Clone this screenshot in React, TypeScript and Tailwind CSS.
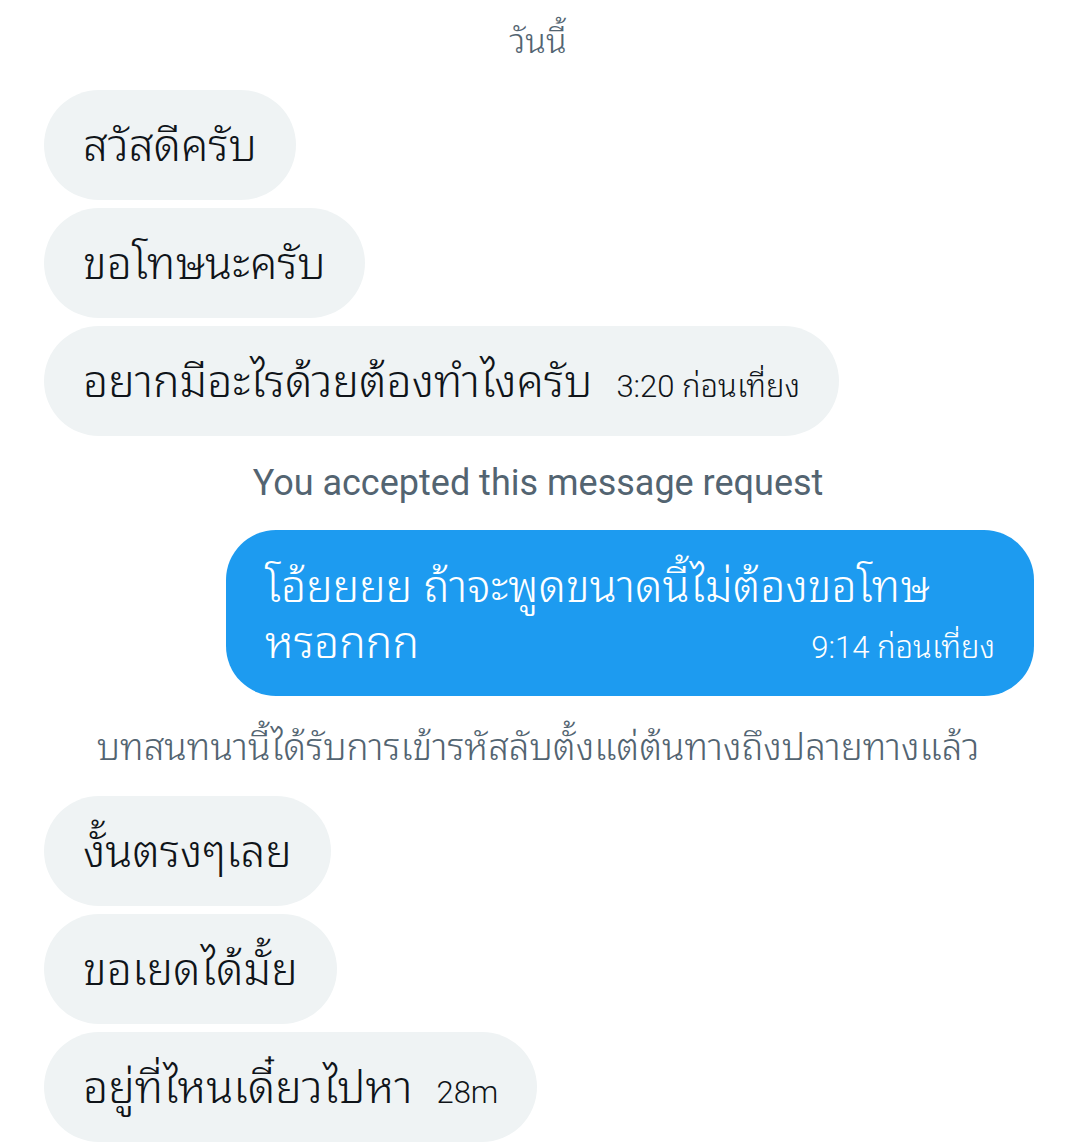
import React from "react";

function In({ text, time }: { text: string; time?: string }) {
  return (
    <div className="flex">
      <div className="flex h-[110px] items-center rounded-full bg-[#eff3f4] px-[39px] text-[#0f1419]">
        <span className="mt-[2px] text-[44.5px] font-[350] leading-none">{text}</span>
        {time && <span className="ml-[24px] mt-[10px] text-[31px] font-[350] leading-none text-[#0f1419]">{time}</span>}
      </div>
    </div>
  );
}

export default function App() {
  return (
    <div className="min-h-[1144px] w-[1076px] bg-white font-[Roboto,'Noto_Sans_Thai_Looped',sans-serif]">
      <div className="flex flex-col px-[44px]">
        <div className="flex h-[90px] items-start justify-center pt-[24px] text-[34px] font-[350] leading-none text-[#536471]">วันนี้</div>
        <div className="flex flex-col gap-[8px]">
          <In text="สวัสดีครับ" />
          <In text="ขอโทษนะครับ" />
          <In text="อยากมีอะไรด้วยต้องทำไงครับ" time="3:20 ก่อนเที่ยง" />
        </div>
        <div className="flex h-[94px] items-center justify-center text-[36px] text-[#536471]">You accepted this message request</div>
        <div className="flex justify-end">
          <div className="-mr-[2px] flex h-[166px] w-[808px] flex-col justify-center rounded-[50px] bg-[#1d9bf0] px-[39px] pt-[4px] text-white">
            <div className="text-[44.5px] font-[350] leading-[56px]">โอ้ยยยย ถ้าจะพูดขนาดนี้ไม่ต้องขอโทษ</div>
            <div className="flex items-baseline justify-between">
              <span className="text-[44.5px] font-[350] leading-[56px]">หรอกกก</span>
              <span className="text-[31px] font-[350] leading-none">9:14 ก่อนเที่ยง</span>
            </div>
          </div>
        </div>
        <div className="flex h-[100px] items-center justify-center pt-[4px] text-[37px] font-[350] text-[#536471]">บทสนทนานี้ได้รับการเข้ารหัสลับตั้งแต่ต้นทางถึงปลายทางแล้ว</div>
        <div className="flex flex-col gap-[8px]">
          <In text="งั้นตรงๆเลย" />
          <In text="ขอเยดได้มั้ย" />
          <In text="อยู่ที่ไหนเดี๋ยวไปหา" time="28m" />
        </div>
      </div>
    </div>
  );
}
